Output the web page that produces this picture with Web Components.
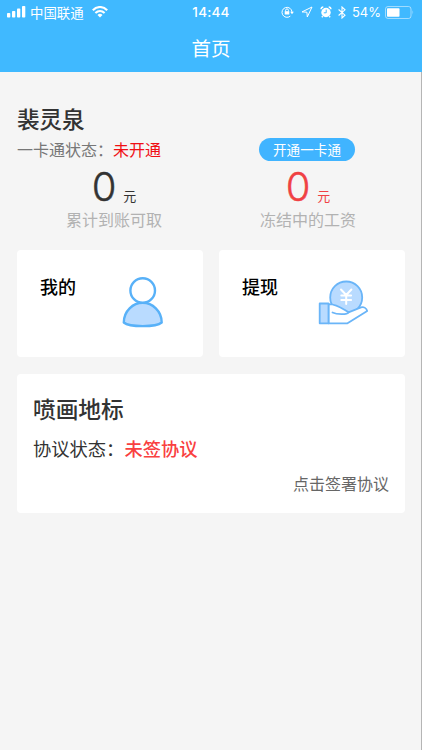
<!DOCTYPE html>
<html lang="zh-CN">
<head>
<meta charset="utf-8">
<title>首页</title>
<style>
  body {
    margin: 0;
    background: #f5f5f5;
    font-family: "Noto Sans CJK SC", sans-serif;
    color: #333;
  }
</style>
</head>
<body>

<template id="status-bar-template">
  <style>
    :host {
      display: flex;
      align-items: center;
      justify-content: space-between;
      height: 24px;
      padding: 0 7px;
      color: #fff;
      font-size: 13.4px;
      line-height: 24px;
    }
    div { display: flex; align-items: center; }
    .left, .right { flex: 1; }
    .right { justify-content: flex-end; }
    .time { font: 500 13.5px/24px Inter, sans-serif; letter-spacing: .2px; }
    .percent { font: 13px/24px Inter, sans-serif; margin: 0 4px 0 6px; }
    .carrier { margin: 0 8px 0 4px; }
    svg { display: block; flex: none; }
  </style>
  <div class="left">
    <svg width="19" height="12" viewBox="0 0 19 12" fill="#fff">
      <rect x="0" y="7" width="3.3" height="4.5" rx=".8"/>
      <rect x="5" y="5" width="3.3" height="6.5" rx=".8"/>
      <rect x="10" y="2.6" width="3.3" height="8.9" rx=".8"/>
      <rect x="15" y="0" width="3.3" height="11.5" rx=".8"/>
    </svg>
    <span class="carrier"><slot name="carrier"></slot></span>
    <svg width="16" height="12" viewBox="0 0 16 12" fill="none" stroke="#fff" stroke-width="2.1">
      <path d="M.8 4.3C5-.1 11-.1 15.2 4.3M3.4 7C6.200 4.300 9.800 4.300 12.600 7"/>
      <path d="M5.500 8.900Q8 6.800 10.500 8.900L8 11.500Z" fill="#fff" stroke="none"/>
    </svg>
  </div>
  <div class="time"><slot name="time"></slot></div>
  <div class="right">
    <svg width="13" height="12" viewBox="0 0 13 12" fill="none" stroke="#fff" stroke-width="1">
      <path d="M9.300 10.100A5 5 0 1 1 11 6"/>
      <path d="M9.100 5.700h3.800L11 8.200z" fill="#fff" stroke="none"/>
      <rect x="3.700" y="5.200" width="4.600" height="3.300" fill="#fff" stroke="none"/>
      <path d="M4.600 5.500V4.300a1.400 1.400 0 0 1 2.800 0v1.200"/>
    </svg>
    <svg style="margin-left:7px" width="12" height="12" viewBox="0 0 12 12" fill="none" stroke="#fff">
      <path d="M11 1L1 5.900L5.900 6.200L6.300 11Z" stroke-linejoin="round"/>
    </svg>
    <svg style="margin-left:7px" width="12" height="12" viewBox="0 0 12 12">
      <circle cx="6" cy="6.500" r="4.700" fill="#fff"/>
      <path d="M1 3.300Q1.200 1 3.300 1M8.700 1Q10.800 1 11 3.300M2.800 10.200L1.800 11.300M9.200 10.200l1 1.100" stroke="#fff" stroke-width="1.400" fill="none"/>
      <path d="M6.200 3.600V6.800H3.800" stroke="#40b9ff" stroke-width="1" fill="none"/>
    </svg>
    <svg style="margin-left:6px" width="8" height="13" viewBox="0 0 8 13" fill="none" stroke="#fff" stroke-width="1.100">
      <path d="M.6 3.500L7 9.200L4 12V1L7 3.800L.6 9.500"/>
    </svg>
    <span class="percent"><slot name="battery"></slot></span>
    <svg width="30" height="13" viewBox="0 0 30 13">
      <rect x=".5" y=".5" width="25.500" height="12" rx="2.500" fill="none" stroke="#fff" stroke-opacity=".5"/>
      <rect x="2" y="2.200" width="12.500" height="8.600" rx=".8" fill="#fff"/>
      <path d="M27.500 4.300Q29.300 6.500 27.500 8.700Z" fill="#fff" fill-opacity=".5"/>
    </svg>
  </div>
</template>

<template id="nav-header-template">
  <style>
    :host { display: block; height: 72px; background: #40b9ff; color: #fff; }
    h1 { margin: 0; font-size: 19.5px; font-weight: 400; line-height: 48px; text-align: center; }
  </style>
  <slot name="status"></slot>
  <h1><slot></slot></h1>
</template>

<template id="account-summary-template">
  <style>
    :host { display: block; padding: 29px 17px 0; }
    h2 { margin: 0; font-size: 22.500px; font-weight: 500; line-height: 34px; }
    .state { display: flex; align-items: center; height: 28px; font-size: 16px; color: #777; }
    .value { color: #f00f14; }
    button {
      width: 96px;
      height: 23px;
      margin: 0 50px 0 auto;
      padding: 0;
      border: 0;
      border-radius: 12px;
      background: #40b4ff;
      color: #fff;
      font: 13.600px/23px "Noto Sans CJK SC", sans-serif;
    }
    .amounts { display: flex; }
  </style>
  <h2><slot name="name"></slot></h2>
  <div class="state">
    <span>一卡通状态：</span><span class="value"><slot name="state"></slot></span>
    <button><slot name="action"></slot></button>
  </div>
  <div class="amounts"><slot></slot></div>
</template>

<template id="amount-cell-template">
  <style>
    :host { display: block; flex: 1; text-align: center; color: #333; }
    :host([frozen]) { color: #f04144; }
    .amount { display: flex; justify-content: center; align-items: baseline; height: 44px; }
    .number { font: 300 40px/48px Inter, sans-serif; -webkit-text-stroke: .4px; }
    .unit { margin-left: 7px; font-size: 13px; line-height: 20px; }
    .label { font-size: 16px; line-height: 24px; color: #b2b2b2; }
  </style>
  <div class="amount"><span class="number"><slot name="number"></slot></span><span class="unit">元</span></div>
  <div class="label"><slot></slot></div>
</template>

<template id="entry-card-template">
  <style>
    :host {
      display: flex;
      flex: 1;
      justify-content: space-between;
      box-sizing: border-box;
      height: 107px;
      padding: 23px 36px 0 23px;
      border-radius: 4px;
      background: #fff;
      color: #000;
    }
    span { font-size: 18px; font-weight: 500; line-height: 27px; }
  </style>
  <span><slot></slot></span>
  <slot name="icon"></slot>
</template>

<template id="user-icon-template">
  <style>
    :host { display: block; width: 48px; height: 60px; }
    svg { display: block; }
  </style>
  <svg width="48" height="60" viewBox="0 0 48 60" stroke="#58b1f8" stroke-width="2.400" stroke-linejoin="round">
    <path d="M4.800 49.500C4.800 38 14 29.800 23.700 29.800S42.700 38 42.700 49.500C37 54.300 10.500 54.300 4.800 49.500Z" fill="#b9dbff"/>
    <circle cx="23.700" cy="17.500" r="12.300" fill="#fff"/>
  </svg>
</template>

<template id="cash-icon-template">
  <style>
    :host { display: block; width: 52px; height: 60px; }
    svg { display: block; }
  </style>
  <svg width="52" height="60" viewBox="0 0 52 60" fill="none" stroke="#6ab5f8" stroke-width="1.800" stroke-linejoin="round" stroke-linecap="round">
    <circle cx="29.200" cy="24.500" r="16" fill="#b9dbff"/>
    <path d="M11.500 31.200C20 31 25 35.500 31.500 39.300L44 34.300C47 33.500 49.500 35.500 50.200 38L30.500 50.300H11.500Z" fill="#fff"/>
    <path d="M15.500 39.500C20 41.800 30.500 41.800 31.500 39.300"/>
    <rect x="2.700" y="30.500" width="8.800" height="19.800" fill="#b9dbff"/>
    <path d="M24 16.500L29.200 22L34.400 16.500M29.200 22V31M24.300 22.500H34.100M24.300 27H34.100" stroke="#fff" stroke-width="2"/>
  </svg>
</template>

<template id="agreement-card-template">
  <style>
    :host {
      display: block;
      box-sizing: border-box;
      height: 139px;
      margin: 17px 17px 0;
      padding: 18px 16px 0;
      border-radius: 4px;
      background: #fff;
    }
    h3 { margin: 0; font-size: 22.700px; font-weight: 500; line-height: 34px; }
    p { margin: 8px 0 0; font-size: 18.300px; line-height: 28px; }
    .value { color: #f9403f; font-weight: 500; }
    .link { margin-top: 9px; font-size: 16px; line-height: 24px; text-align: right; color: #666; }
  </style>
  <h3><slot name="title"></slot></h3>
  <p>协议状态：<span class="value"><slot name="state"></slot></span></p>
  <div class="link"><slot name="link"></slot></div>
</template>

<template id="home-page-template">
  <style>
    :host {
      display: block;
      box-sizing: border-box;
      height: 750px;
      overflow: hidden;
      box-shadow: inset -1px 0 #b5b5b5;
    }
    .entries { display: flex; gap: 16px; padding: 19px 17px 0; }
  </style>
  <slot name="header"></slot>
  <slot name="summary"></slot>
  <div class="entries"><slot name="entry"></slot></div>
  <slot></slot>
</template>

<home-page>
  <nav-header slot="header">
    <status-bar slot="status">
      <span slot="carrier">中国联通</span>
      <span slot="time">14:44</span>
      <span slot="battery">54%</span>
    </status-bar>
    首页
  </nav-header>
  <account-summary slot="summary">
    <span slot="name">裴灵泉</span>
    <span slot="state">未开通</span>
    <span slot="action">开通一卡通</span>
    <amount-cell><span slot="number">0</span>累计到账可取</amount-cell>
    <amount-cell frozen><span slot="number">0</span>冻结中的工资</amount-cell>
  </account-summary>
  <entry-card slot="entry">我的<user-icon slot="icon"></user-icon></entry-card>
  <entry-card slot="entry">提现<cash-icon slot="icon"></cash-icon></entry-card>
  <agreement-card>
    <span slot="title">喷画地标</span>
    <span slot="state">未签协议</span>
    <span slot="link">点击签署协议</span>
  </agreement-card>
</home-page>

<script>
  class TemplateElement extends HTMLElement {
    constructor() {
      super();
      const template = document.getElementById(this.localName + '-template');
      this.attachShadow({ mode: 'open' })
        .appendChild(template.content.cloneNode(true));
    }
  }

  customElements.define('status-bar', class extends TemplateElement {});
  customElements.define('nav-header', class extends TemplateElement {});
  customElements.define('account-summary', class extends TemplateElement {});
  customElements.define('amount-cell', class extends TemplateElement {});
  customElements.define('entry-card', class extends TemplateElement {});
  customElements.define('user-icon', class extends TemplateElement {});
  customElements.define('cash-icon', class extends TemplateElement {});
  customElements.define('agreement-card', class extends TemplateElement {});
  customElements.define('home-page', class extends TemplateElement {});
</script>
</body>
</html>
